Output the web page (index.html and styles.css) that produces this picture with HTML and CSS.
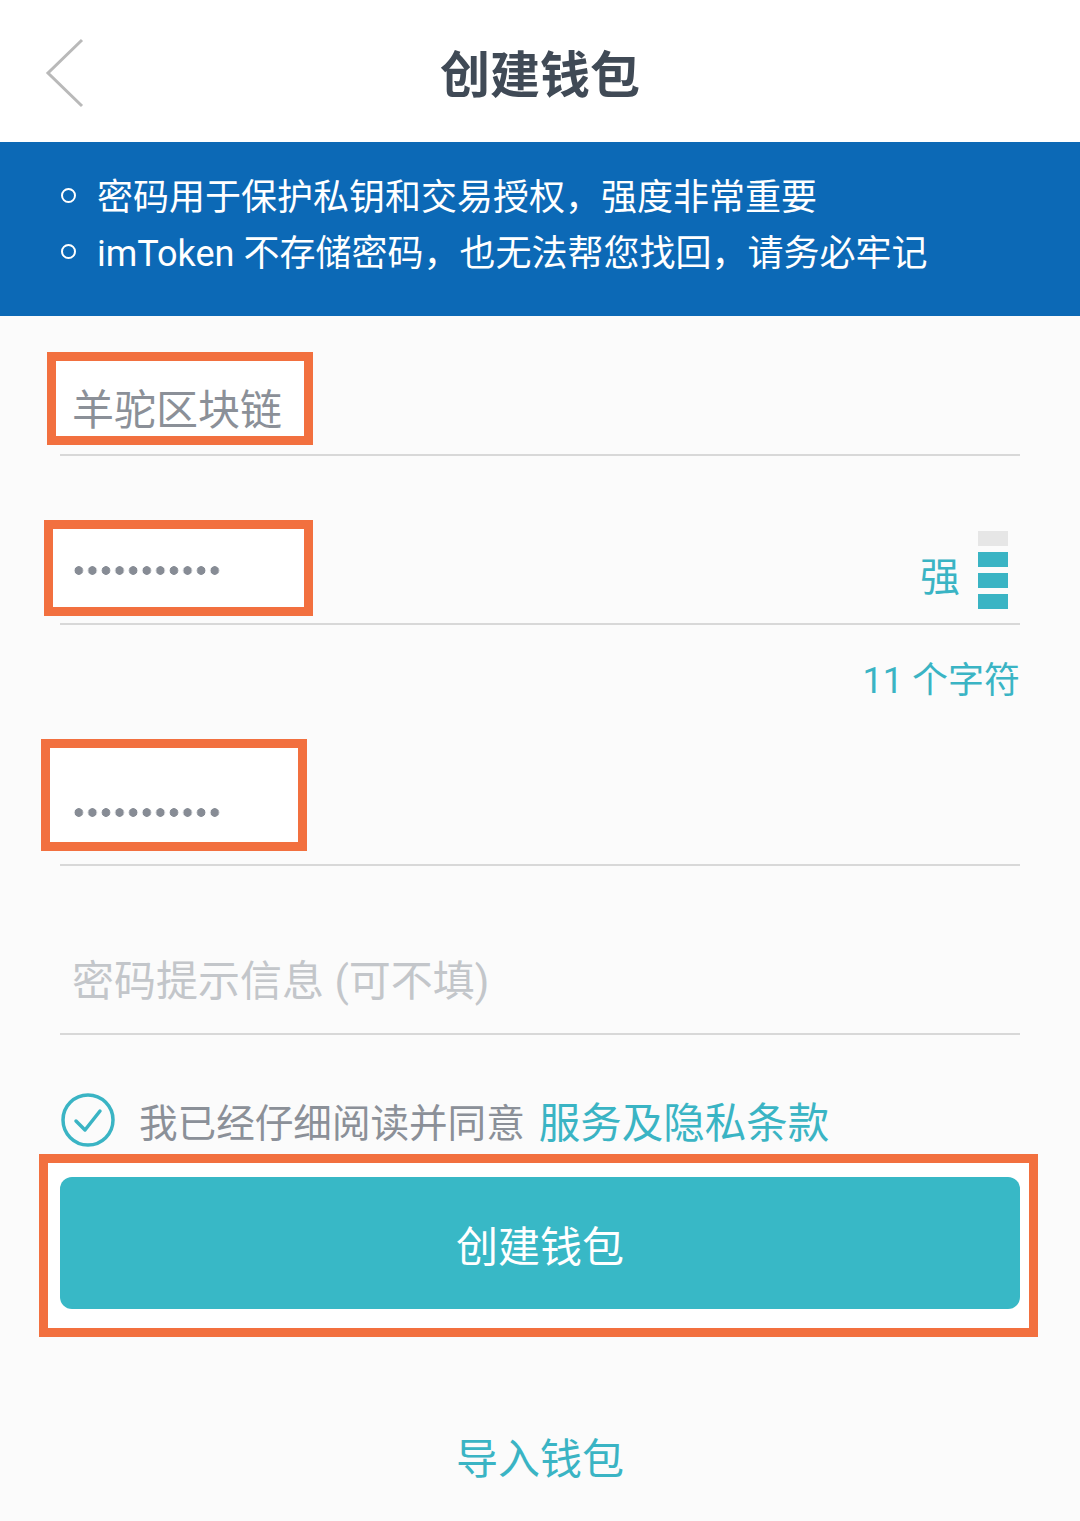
FILE: index.html
```html
<!DOCTYPE html>
<html lang="zh-CN">
<head>
    <meta charset="UTF-8">
    <meta name="viewport" content="width=device-width, initial-scale=1.0">
    <title>创建钱包</title>
    <link rel="stylesheet" href="styles.css">
</head>
<body>
    <header class="top-bar">
        <a class="back-btn" href="#">
            <svg width="40" height="70" viewBox="0 0 40 70">
                <polyline points="37,2 3,35 37,68" fill="none" stroke="#b9b9b9" stroke-width="3"/>
            </svg>
        </a>
        <h1 class="top-title">创建钱包</h1>
        <span></span>
    </header>

    <ul class="notice">
        <li>密码用于保护私钥和交易授权，强度非常重要</li>
        <li>imToken 不存储密码，也无法帮您找回，请务必牢记</li>
    </ul>

    <main class="form">
        <div class="field field-name">
            <span class="mark mark-name"></span>
            <span class="value">羊驼区块链</span>
        </div>

        <div class="field field-pwd">
            <span class="mark mark-pwd"></span>
            <span class="dots"></span>
            <div class="strength">
                <span class="strength-label">强</span>
                <div class="strength-bars">
                    <i class="off"></i>
                    <i></i>
                    <i></i>
                    <i></i>
                </div>
            </div>
        </div>

        <p class="char-count">11 个字符</p>

        <div class="field field-repeat">
            <span class="mark mark-repeat"></span>
            <span class="dots"></span>
        </div>

        <div class="field field-hint">
            <span class="placeholder">密码提示信息 (可不填)</span>
        </div>

        <label class="agree">
            <svg width="56" height="56" viewBox="0 0 56 56">
                <circle cx="28" cy="28" r="25" fill="none" stroke="#3ab4c4" stroke-width="3.5"/>
                <polyline points="16,29 25,38 40,19" fill="none" stroke="#3ab4c4" stroke-width="3.5" stroke-linecap="round" stroke-linejoin="round"/>
            </svg>
            <span class="agree-text">我已经仔细阅读并同意</span>
            <a class="agree-link" href="#">服务及隐私条款</a>
        </label>

        <div class="submit-wrap">
            <span class="mark mark-submit"></span>
            <button class="submit-btn">创建钱包</button>
        </div>

        <a class="import-link" href="#">导入钱包</a>
    </main>
</body>
</html>
```

FILE: styles.css
```css
:root {
    --blue: #0c69b6;
    --teal: #3ab4c4;
    --btn-teal: #38b8c6;
    --title: #404a56;
    --text-gray: #8b9098;
    --placeholder: #c3c6ca;
    --line: #d8d8d8;
    --mark: #f2703f;
}

* {
    margin: 0;
    padding: 0;
    box-sizing: border-box;
}

body {
    font-family: 'Roboto', 'Noto Sans CJK SC', sans-serif;
    background: #fbfbfb;
    width: 1080px;
    min-height: 1521px;
}

a {
    text-decoration: none;
}

.top-bar {
    height: 142px;
    background: #fff;
    display: grid;
    grid-template-columns: 1fr auto 1fr;
    align-items: center;
}

.back-btn {
    display: flex;
    padding-left: 45px;
    padding-top: 4px;
}

.top-title {
    font-size: 50px;
    font-weight: 700;
    color: var(--title);
}

.notice {
    list-style: none;
    background: var(--blue);
    color: #fff;
    padding: 28px 0 34px 97px;
    font-size: 36px;
    line-height: 56px;
}

.notice li {
    position: relative;
}

.notice li::before {
    content: '';
    position: absolute;
    left: -36px;
    top: 18px;
    width: 11px;
    height: 11px;
    border: 2.5px solid #fff;
    border-radius: 50%;
}

.form {
    padding: 0 60px;
    display: flex;
    flex-direction: column;
}

.field {
    position: relative;
    display: flex;
    align-items: center;
    padding-left: 12px;
    border-bottom: 2px solid var(--line);
}

.field-name {
    margin-top: 46px;
    height: 94px;
    padding-bottom: 3px;
    font-size: 42px;
    color: var(--text-gray);
}

.field-pwd {
    margin-top: 66px;
    height: 103px;
    padding-bottom: 4px;
}

.field-repeat {
    margin-top: 48px;
    height: 109px;
    padding-top: 4px;
}

.field-hint {
    margin-top: 62px;
    height: 107px;
    padding-bottom: 7px;
    font-size: 42px;
    color: var(--placeholder);
}

.value, .placeholder, .dots {
    position: relative;
    z-index: 1;
}

.dots {
    display: block;
    width: 150px;
    height: 9px;
    background: radial-gradient(circle, #878c95 4px, transparent 4.6px);
    background-size: 13.6px 9px;
}

.mark {
    position: absolute;
    border: 9px solid var(--mark);
    background: #fff;
}

.mark-name {
    left: -13px;
    top: -10px;
    width: 266px;
    height: 93px;
}

.mark-pwd {
    left: -16px;
    top: -2px;
    width: 269px;
    height: 96px;
}

.mark-repeat {
    left: -19px;
    top: -18px;
    width: 266px;
    height: 112px;
}

.strength {
    margin-left: auto;
    display: flex;
    align-items: center;
    gap: 18px;
    margin-right: 12px;
}

.strength-label {
    font-size: 40px;
    color: var(--teal);
    margin-top: 6px;
}

.strength-bars {
    display: flex;
    flex-direction: column;
    gap: 6px;
    margin-top: -2px;
}

.strength-bars i {
    display: block;
    width: 30px;
    height: 15px;
    background: var(--teal);
}

.strength-bars i.off {
    background: #e6e6e6;
}

.char-count {
    margin-top: 28px;
    height: 56px;
    line-height: 56px;
    text-align: right;
    font-size: 36px;
    color: var(--teal);
}

.agree {
    margin-top: 55px;
    height: 60px;
    display: flex;
    align-items: center;
}

.agree svg {
    margin-right: 23px;
}

.agree-text {
    font-size: 38.6px;
    color: var(--text-gray);
    margin-right: 14px;
}

.agree-link {
    font-size: 41.5px;
    color: var(--teal);
}

.submit-wrap {
    position: relative;
    margin-top: 27px;
}

.mark-submit {
    left: -21px;
    top: -23px;
    width: 999px;
    height: 183px;
}

.submit-btn {
    position: relative;
    z-index: 1;
    display: block;
    width: 100%;
    height: 132px;
    border: none;
    border-radius: 12px;
    background: var(--btn-teal);
    color: #fff;
    font-family: inherit;
    font-size: 42px;
    cursor: pointer;
}

.import-link {
    margin-top: 121px;
    height: 60px;
    line-height: 60px;
    text-align: center;
    font-size: 42px;
    color: var(--teal);
}
```
